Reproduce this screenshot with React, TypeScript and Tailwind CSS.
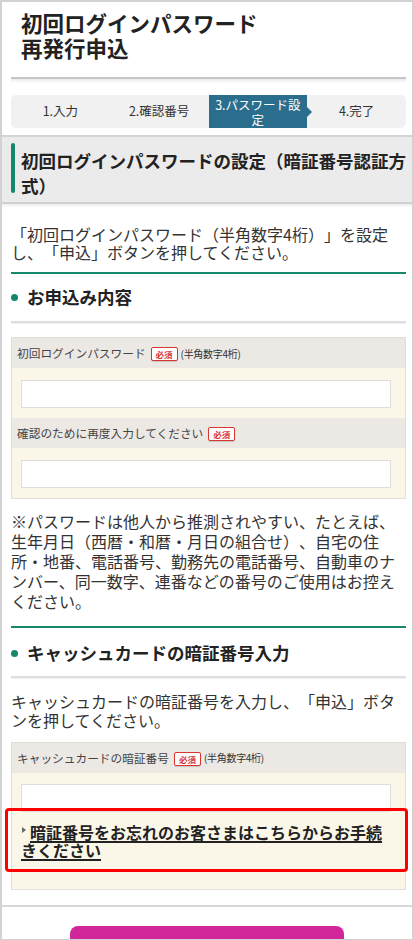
import React from "react";

const GREEN = "bg-[#17876b]";

function Badge() {
  return (
    <span className="inline-flex items-center justify-center w-[27px] h-[14px] border border-[#d9342f] rounded-[2px] bg-white text-[#d9342f] text-[8.5px] font-bold leading-none shadow-[0_1px_1px_rgba(0,0,0,0.15)]">
      必須
    </span>
  );
}

function LabelRow({ label, note }: { label: string; note?: string }) {
  return (
    <div className="h-[30px] bg-[#ece8e4] flex items-center pl-[5px] text-[11.7px] text-[#444]">
      <span>{label}</span>
      <span className="ml-[5px]">
        <Badge />
      </span>
      {note && <span className="ml-[3px] text-[10px] text-[#333] tracking-[-0.3px]">{note}</span>}
    </div>
  );
}

function InputRow() {
  return (
    <div className="h-[50px] bg-[#faf7e9] pt-[12px] pl-[9px]">
      <div className="w-[370px] h-[28px] bg-white border border-[#dedede]" />
    </div>
  );
}

function SectionHeading({ children }: { children: React.ReactNode }) {
  return (
    <div className="flex items-center h-[28px] text-[17.5px] font-bold text-[#222]">
      <span className={`w-[7px] h-[7px] rounded-full ${GREEN} mr-[9px]`} />
      <span>{children}</span>
    </div>
  );
}

export default function App() {
  const steps = ["1.入力", "2.確認番号", "3.パスワード設定", "4.完了"];
  return (
    <div className="relative w-[414px] h-[940px] overflow-hidden border-2 border-b border-[#d2d2d2] bg-white font-['Noto_Sans_CJK_JP',sans-serif] text-[#333] [text-spacing-trim:space-all]">
      {/* Title */}
      <div className="h-[75px] pl-[19px] pt-[7.5px]">
        <h1 className="w-[245px] text-[21.5px] leading-[25px] font-bold text-[#222]">
          初回ログインパスワード再発行申込
        </h1>
      </div>
      <div className="ml-[9px] mr-[6px]">
        <div className="h-[2px] bg-[#c6c6c6]" />
        <div className="h-[4px] bg-gradient-to-b from-[#ebebeb] to-white" />
      </div>

      {/* Steps */}
      <div className="mt-[12px] ml-[9px] mr-[6px] h-[33px] bg-[#f1f1f1] rounded-[5px] grid grid-cols-4">
        {steps.map((s, i) =>
          i === 2 ? (
            <div
              key={s}
              className="relative bg-[#2b6d8c] text-white text-[12.5px] leading-[15px] flex items-center justify-center text-center px-[1px]"
            >
              <span>{s}</span>
              <span className="absolute right-[-5px] top-[12px] w-0 h-0 border-y-[5px] border-y-transparent border-l-[5px] border-l-[#2b6d8c]" />
            </div>
          ) : (
            <div key={s} className="flex items-center justify-center text-[12.5px] text-[#333]">
              {s}
            </div>
          )
        )}
      </div>

      {/* Header */}
      <div className="mt-[7px] border-t-2 border-[#d4d4d4] bg-[#ebebeb] flex items-start pt-[6px] pb-[4.5px]">
        <div className={`ml-[9px] w-[4px] h-[50px] rounded-[2px] ${GREEN} shrink-0`} />
        <div className="ml-[6px] mt-[4.5px] pr-[3px] text-[17.5px] leading-[25px] font-bold text-[#222]">
          初回ログインパスワードの設定（暗証番号認証方式）
        </div>
      </div>
      <div className="h-[2px] bg-[#d0d0d0]" />
      <div className="h-[4px] bg-gradient-to-b from-[#ededed] to-white" />

      {/* Main */}
      <div className="pl-[9px] pr-[6px]">
        <p className="mt-[16.5px] text-[16px] leading-[18.5px] text-[#333]">
          「初回ログインパスワード（半角数字4桁）」を設定し、「申込」ボタンを押してください。
        </p>

        <div className={`mt-[10.5px] h-[2px] ${GREEN}`} />
        <div className="mt-[9px]">
          <SectionHeading>お申込み内容</SectionHeading>
        </div>
        <div className="mt-[10px] h-[2px] bg-[#dedede]" />
        <div className="h-[1px] bg-[#f0f0f0]" />

        <div className="mt-[13px] border border-[#e2ded9]">
          <LabelRow label="初回ログインパスワード" note="(半角数字4桁)" />
          <InputRow />
          <LabelRow label="確認のために再度入力してください" />
          <InputRow />
        </div>

        <p className="mt-[12px] text-[16px] leading-[20px] text-[#333]">
          ※パスワードは他人から推測されやすい、たとえば、生年月日（西暦・和暦・月日の組合せ）、自宅の住所・地番、電話番号、勤務先の電話番号、自動車のナンバー、同一数字、連番などの番号のご使用はお控えください。
        </p>

        <div className={`mt-[15px] h-[2px] ${GREEN}`} />
        <div className="mt-[11px]">
          <SectionHeading>キャッシュカードの暗証番号入力</SectionHeading>
        </div>
        <div className="mt-[9px] h-[2px] bg-[#dedede]" />
        <div className="h-[1px] bg-[#f0f0f0]" />

        <p className="mt-[13px] text-[16px] leading-[19px] text-[#333]">
          キャッシュカードの暗証番号を入力し、「申込」ボタンを押してください。
        </p>

        <div className="mt-[11.5px] border border-[#e2ded9]">
          <LabelRow label="キャッシュカードの暗証番号" note="(半角数字4桁)" />
          <div className="bg-[#faf7e9] pt-[11px] pl-[9px] pb-[30px]">
            <div className="w-[370px] h-[28px] bg-white border border-[#dedede]" />
            <div className="mt-[11.5px] w-[370px] text-[16px] leading-[18px] font-bold text-[#222]">
              <span className="inline-block w-[9px] align-top pt-[4px]">
                <span className="block w-0 h-0 border-y-[3px] border-y-transparent border-l-[4px] border-l-[#666] ml-[1px]" />
              </span>
              <a href="#" className="underline decoration-[1.5px] underline-offset-[2px] text-[#222]">
                暗証番号をお忘れのお客さまはこちらからお手続きください
              </a>
            </div>
          </div>
        </div>
      </div>

      <div className="mt-[15px] h-[2px] bg-[#d8d8d8]" />
      <div className="mt-[19px] mx-auto w-[274px] h-[60px] rounded-t-[8px] bg-[#d2279b]" />

      {/* Annotation overlay */}
      <div className="absolute left-[3px] top-[806px] w-[403px] h-[64px] border-[3px] border-[#ff0000] rounded-[4px] pointer-events-none" />
    </div>
  );
}
